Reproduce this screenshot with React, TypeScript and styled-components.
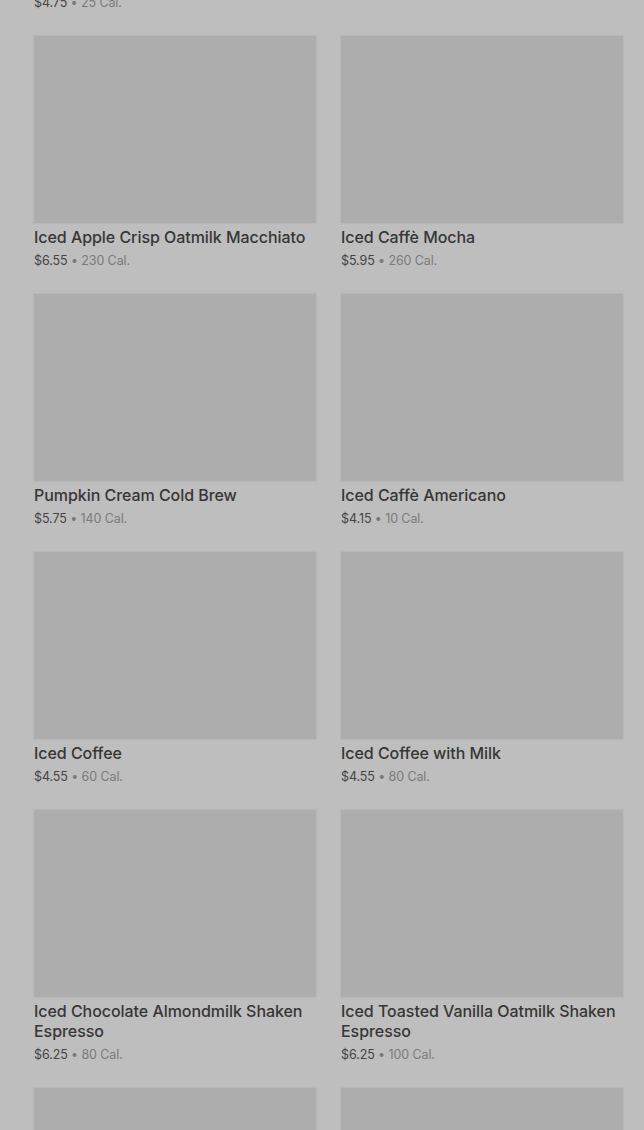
import React from "react";
import styled, { createGlobalStyle } from "styled-components";

const Global = createGlobalStyle`
  html, body { margin: 0; padding: 0; background: #bebebe; }
  body { font-family: Inter, "Noto Sans", "Liberation Sans", sans-serif; overflow: hidden; }
`;

const Page = styled.div`
  width: 644px;
  height: 1130px;
  overflow: hidden;
  background: #bebebe;
`;

const Grid = styled.div`
  display: grid;
  grid-template-columns: 282px 282px;
  column-gap: 25px;
  row-gap: 23px;
  padding: 0 21px 0 34px;
  margin-top: -222px;
`;

const Card = styled.div`
  display: flex;
  flex-direction: column;
`;

const Thumb = styled.div`
  height: 187px;
  background: #adadad;
  box-shadow: 0 0 1px 1px rgba(0, 0, 0, 0.03);
`;

const Title = styled.div`
  margin-top: 4px;
  font-size: 16px;
  line-height: 20px;
  font-weight: 500;
  color: #363636;
  letter-spacing: -0.05px;
`;

const Meta = styled.div`
  margin-top: 4px;
  font-size: 12.5px;
  line-height: 20px;
  letter-spacing: -0.1px;
  color: #444444;
`;

const Cal = styled.span`
  color: #7a7a7a;
`;

type Item = { name?: string; price?: string; cal?: string } | null;

const items: Item[] = [
  { name: "Iced Shaken Espresso", price: "$4.75", cal: "25 Cal." },
  null,
  { name: "Iced Apple Crisp Oatmilk Macchiato", price: "$6.55", cal: "230 Cal." },
  { name: "Iced Caffè Mocha", price: "$5.95", cal: "260 Cal." },
  { name: "Pumpkin Cream Cold Brew", price: "$5.75", cal: "140 Cal." },
  { name: "Iced Caffè Americano", price: "$4.15", cal: "10 Cal." },
  { name: "Iced Coffee", price: "$4.55", cal: "60 Cal." },
  { name: "Iced Coffee with Milk", price: "$4.55", cal: "80 Cal." },
  { name: "Iced Chocolate Almondmilk Shaken Espresso", price: "$6.25", cal: "80 Cal." },
  { name: "Iced Toasted Vanilla Oatmilk Shaken Espresso", price: "$6.25", cal: "100 Cal." },
  {},
  {},
];

export default function App() {
  return (
    <Page>
      <Global />
      <Grid>
        {items.map((it, i) =>
          it ? (
            <Card key={i}>
              <Thumb />
              {it.name && <Title>{it.name}</Title>}
              {it.price && (
                <Meta>
                  {it.price} <Cal>• {it.cal}</Cal>
                </Meta>
              )}
            </Card>
          ) : (
            <div key={i} />
          )
        )}
      </Grid>
    </Page>
  );
}
